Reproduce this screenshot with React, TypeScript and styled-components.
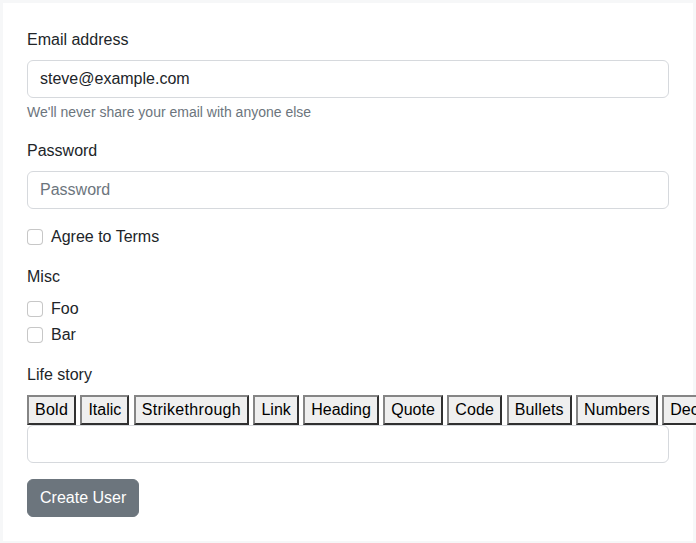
import React from "react";
import styled, { createGlobalStyle } from "styled-components";

const Global = createGlobalStyle`
  html, body { margin: 0; padding: 0; background: #f6f7f8; }
  body {
    font-family: "Liberation Sans", Arial, sans-serif;
    font-size: 16px;
    line-height: 1.5;
    color: #212529;
  }
  * { box-sizing: border-box; }
`;

const Page = styled.div`
  width: 100vw;
  height: 100vh;
  overflow: hidden;
  padding: 3px;
`;

const Card = styled.form`
  background: #ffffff;
  padding: 25px 24px 24px 24px;
  min-height: 537px;
  width: 690px;
`;

const Group = styled.div<{ $gap?: number }>`
  margin-bottom: ${(p) => (p.$gap ?? 16)}px;
`;

const Label = styled.label`
  display: block;
  margin-bottom: 8px;
  line-height: 24px;
`;

const Input = styled.input`
  display: block;
  width: 100%;
  height: 38px;
  padding: 6px 12px;
  font-family: inherit;
  font-size: 16px;
  line-height: 24px;
  color: #212529;
  background: #fff;
  border: 1px solid #d6d9dd;
  border-radius: 6px;
  outline: none;
  &::placeholder { color: #6c757d; opacity: 1; }
`;

const Help = styled.div`
  margin-top: 4px;
  font-size: 14px;
  line-height: 21px;
  color: #6c757d;
`;

const Check = styled.label<{ $mb?: number }>`
  display: flex;
  align-items: center;
  gap: 8px;
  min-height: 24px;
  line-height: 24px;
  margin-bottom: ${(p) => p.$mb ?? 2}px;
`;

const Box = styled.input`
  appearance: none;
  width: 16px;
  height: 16px;
  margin: 0;
  border: 1px solid rgba(0, 0, 0, 0.22);
  border-radius: 4px;
  background: #fff;
  flex: none;
`;

const Toolbar = styled.div`
  display: flex;
  gap: 4.4px;
  white-space: nowrap;
  width: max-content;
`;

const ToolButton = styled.button<{ $tracking?: number }>`
  font-family: "Liberation Sans", Arial, sans-serif;
  font-size: 16px;
  line-height: 24px;
  letter-spacing: ${(p) => p.$tracking ?? 0}px;
  padding: 1px 6px;
  margin: 0;
  color: #000;
  background: #efefef;
  border-width: 2px;
  border-style: solid;
  border-color: #858585 #303030 #303030 #858585;
  border-radius: 0;
  flex: none;
`;

const Editor = styled.div`
  height: 38px;
  padding: 6px 12px;
  border: 1px solid #d6d9dd;
  border-radius: 6px;
  background: #fff;
`;

const Submit = styled.button`
  font-family: inherit;
  font-size: 16px;
  line-height: 24px;
  padding: 6px 12px;
  color: #fff;
  background: #6c757d;
  border: 1px solid #6c757d;
  border-radius: 6px;
`;

const tools: { label: string; tracking?: number }[] = [
  { label: "Bold", tracking: 0.25 },
  { label: "Italic" },
  { label: "Strikethrough", tracking: 0.32 },
  { label: "Link" },
  { label: "Heading" },
  { label: "Quote" },
  { label: "Code", tracking: 0.2 },
  { label: "Bullets", tracking: 0.15 },
  { label: "Numbers", tracking: 0.12 },
  { label: "Decrease Level" },
  { label: "Increase Level" },
  { label: "Attach Files" },
  { label: "Undo" },
  { label: "Redo" },
];

export default function App() {
  return (
    <Page>
      <Global />
      <Card onSubmit={(e) => e.preventDefault()}>
        <Group>
          <Label htmlFor="email">Email address</Label>
          <Input id="email" type="email" defaultValue="steve@example.com" />
          <Help>We'll never share your email with anyone else</Help>
        </Group>
        <Group>
          <Label htmlFor="password">Password</Label>
          <Input id="password" type="password" placeholder="Password" />
        </Group>
        <Group>
          <Check>
            <Box type="checkbox" />
            Agree to Terms
          </Check>
        </Group>
        <Group>
          <Label>Misc</Label>
          <Check>
            <Box type="checkbox" />
            Foo
          </Check>
          <Check>
            <Box type="checkbox" />
            Bar
          </Check>
        </Group>
        <Group>
          <Label>Life story</Label>
          <Toolbar>
            {tools.map((t) => (
              <ToolButton type="button" key={t.label} $tracking={t.tracking}>
                {t.label}
              </ToolButton>
            ))}
          </Toolbar>
          <Editor />
        </Group>
        <Submit type="submit">Create User</Submit>
      </Card>
    </Page>
  );
}
